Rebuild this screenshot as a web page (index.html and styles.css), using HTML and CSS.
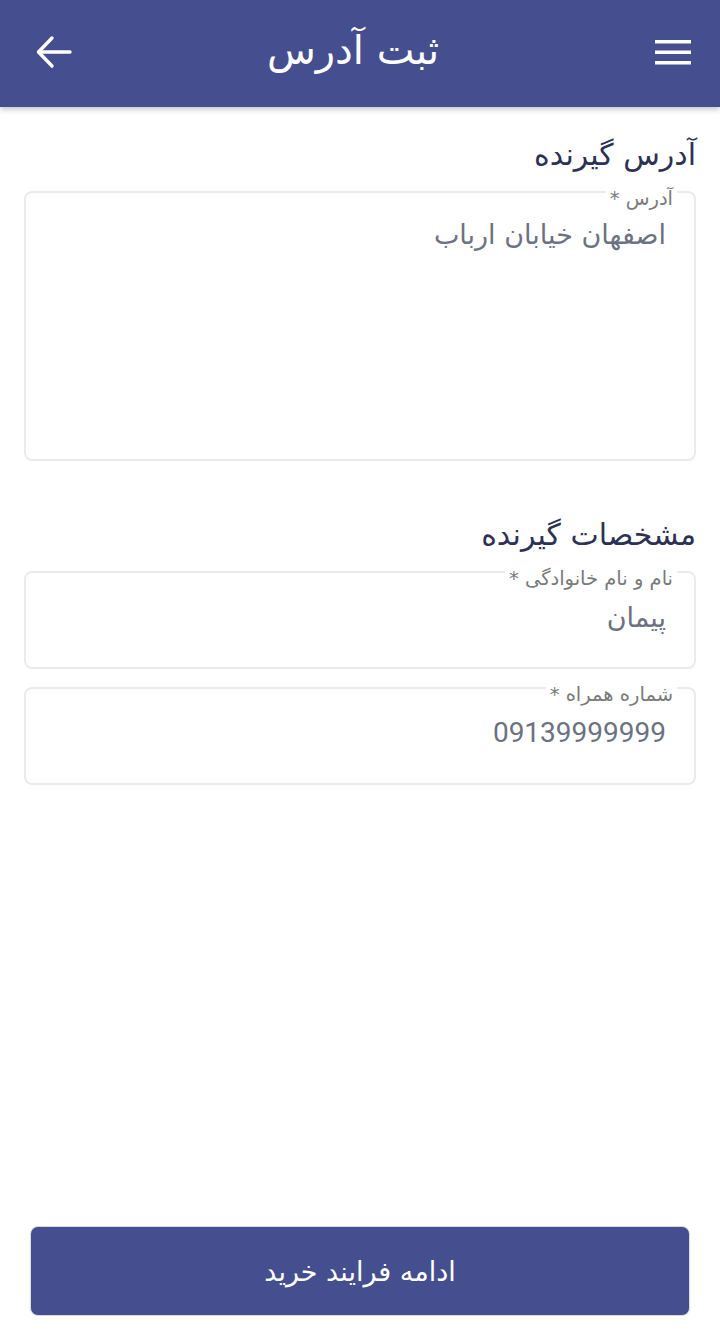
FILE: index.html
```html
<!DOCTYPE html>
<html lang="fa" dir="rtl">
<head>
<meta charset="utf-8">
<title>ثبت آدرس</title>
<link rel="stylesheet" href="styles.css">
</head>
<body>
<div class="page">
  <header class="topbar">
    <button class="icon-btn" aria-label="menu">
      <svg width="38" height="30" viewBox="0 0 38 30"><g fill="#fff"><rect x="1" y="3" width="36" height="3.5"/><rect x="1" y="13.5" width="36" height="3.5"/><rect x="1" y="24" width="36" height="3.5"/></g></svg>
    </button>
    <h1 class="title">ثبت آدرس</h1>
    <button class="icon-btn" aria-label="back">
      <svg width="36" height="34" viewBox="0 0 36 34"><g fill="none" stroke="#fff" stroke-width="3.4" stroke-linecap="round" stroke-linejoin="round"><path d="M34 17H3"/><path d="M16 3L2.5 17 16 31"/></g></svg>
    </button>
  </header>
  <main class="content">
    <h2 class="section-title">آدرس گیرنده</h2>
    <fieldset class="field field-tall">
      <legend class="field-label">آدرس *</legend>
      <div class="field-value">اصفهان خیابان ارباب</div>
    </fieldset>

    <h2 class="section-title second">مشخصات گیرنده</h2>
    <fieldset class="field field-name">
      <legend class="field-label">نام و نام خانوادگی *</legend>
      <div class="field-value">پیمان</div>
    </fieldset>
    <fieldset class="field">
      <legend class="field-label">شماره همراه *</legend>
      <div class="field-value num">09139999999</div>
    </fieldset>
  </main>
  <footer class="footer">
    <button class="primary-btn">ادامه فرایند خرید</button>
  </footer>
</div>
</body>
</html>
```

FILE: styles.css
```css
* { box-sizing: border-box; }
html, body { margin: 0; padding: 0; background: #fff; }
body { font-family: "DejaVu Sans", "Noto Sans", sans-serif; }
.page { height: 1336px; display: flex; flex-direction: column; }
.topbar {
  height: 107px;
  background: #454e8e;
  display: flex;
  align-items: center;
  justify-content: space-between;
  padding: 0 28px 4px 36px;
  box-shadow: 0 2px 6px rgba(0,0,0,0.25);
  position: relative;
  z-index: 1;
}
.icon-btn { background: none; border: 0; padding: 0; display: flex; }
.title {
  margin: 0 20px 0 0;
  color: #fff;
  font-weight: normal;
  font-size: 40px;
  line-height: 50px;
  padding-bottom: 4px;
}
.content {
  flex: 1;
  padding: 30px 24px 0;
  display: flex;
  flex-direction: column;
}
.section-title {
  margin: 0 0 5px;
  font-weight: normal;
  font-size: 30px;
  color: #2d3154;
  line-height: 36px;
}
.section-title.second { margin-top: 51px; }
.field {
  margin: 0 0 5px;
  border: 2px solid #ebebeb;
  border-radius: 8px;
  padding: 0;
  height: 111px;
  min-width: 0;
}
.field-tall { height: 283px; }
.field-label {
  margin-right: 17px;
  padding: 14px 4px 0;
  font-size: 19.5px;
  line-height: 14px;
  color: #7a7a7a;
}
.field-value {
  padding: 11px 28px 0;
  font-size: 27px;
  line-height: 36px;
  color: #6c7280;
}
.field-name .field-value { padding-top: 14px; }
.field-value.num { font-family: Roboto, "Liberation Sans", sans-serif; font-size: 28px; padding-top: 13px; }
.footer { padding: 0 30px 20px; }
.primary-btn {
  width: 100%;
  height: 90px;
  background: #454e8e;
  color: #fff;
  border: 1px solid #d8d8e0;
  border-radius: 8px;
  font-family: inherit;
  font-size: 27px;
}
```
